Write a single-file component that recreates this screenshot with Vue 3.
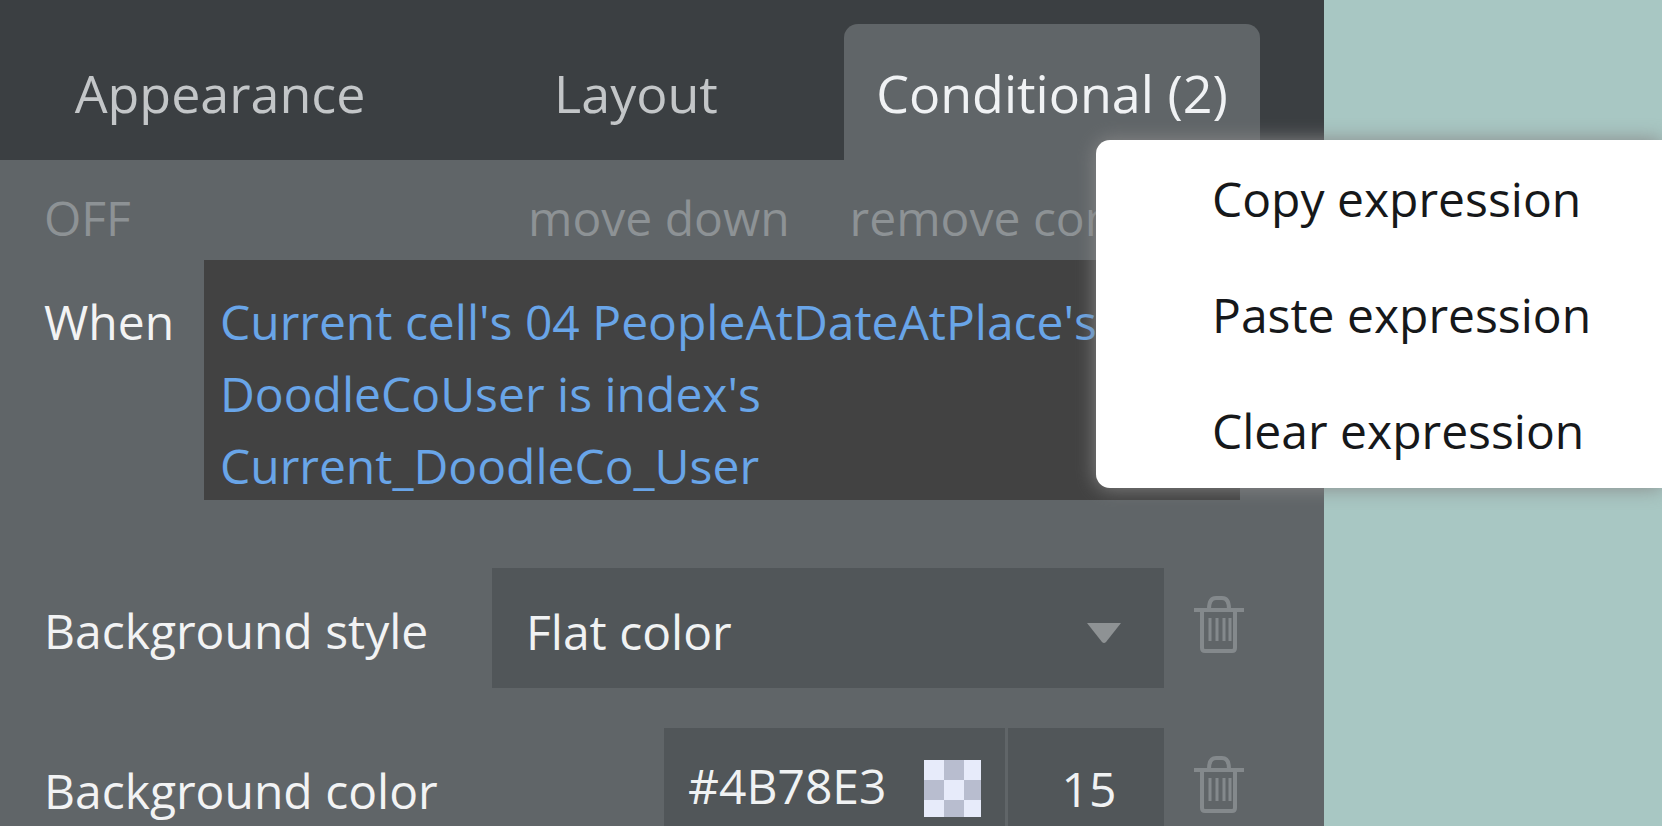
<script setup>
import { ref } from 'vue'

const tabs = ['Appearance', 'Layout', 'Conditional (2)']
const activeTab = ref(2)
const expression = ref(
  "Current cell's 04 PeopleAtDateAtPlace's DoodleCoUser is index's Current_DoodleCo_User"
)
const backgroundStyle = ref('Flat color')
const colorHex = ref('#4B78E3')
const opacity = ref('15')
const menuItems = ['Copy expression', 'Paste expression', 'Clear expression']
</script>

<template>
  <div class="page">
    <section class="panel">
      <nav class="tabs" role="tablist">
        <button
          v-for="(tab, i) in tabs"
          :key="tab"
          type="button"
          role="tab"
          class="tab"
          :class="{ active: activeTab === i }"
          :aria-selected="activeTab === i"
          @click="activeTab = i"
        >{{ tab }}</button>
      </nav>

      <div class="body">
        <div class="actions">
          <button type="button" class="action toggle">OFF</button>
          <button type="button" class="action">move down</button>
          <button type="button" class="action">remove condition</button>
        </div>

        <div class="when">
          <label class="label" for="when">When</label>
          <textarea id="when" v-model="expression" class="expression" rows="3" spellcheck="false"></textarea>
        </div>

        <div class="property">
          <label class="label" for="bg-style">Background style</label>
          <div class="select-wrap">
            <select id="bg-style" v-model="backgroundStyle" class="field select">
              <option>Flat color</option>
            </select>
            <svg class="caret" viewBox="0 0 34 20" aria-hidden="true"><path d="M0 0H34L19 19Q17 21 15 19Z" /></svg>
          </div>
          <button type="button" class="trash" aria-label="Remove background style">
            <svg viewBox="0 0 50 58" aria-hidden="true">
              <path d="M0 15H50M8 16V53Q8 56 11 56H38Q41 56 41 53V16M15 14C15 6 18 3 22 3H28C32 3 35 6 35 14" />
              <path class="ribs" d="M16 23V46M23 23V46M30 23V46M36 23V46" />
            </svg>
          </button>
        </div>

        <div class="property">
          <label class="label" for="bg-color">Background color</label>
          <div class="color-group">
            <div class="color-wrap">
              <input id="bg-color" v-model="colorHex" class="field hex" type="text" />
              <span class="swatch"></span>
            </div>
            <input v-model="opacity" class="field opacity" type="text" aria-label="Opacity" />
          </div>
          <button type="button" class="trash" aria-label="Remove background color">
            <svg viewBox="0 0 50 58" aria-hidden="true">
              <path d="M0 15H50M8 16V53Q8 56 11 56H38Q41 56 41 53V16M15 14C15 6 18 3 22 3H28C32 3 35 6 35 14" />
              <path class="ribs" d="M16 23V46M23 23V46M30 23V46M36 23V46" />
            </svg>
          </button>
        </div>
      </div>
    </section>

    <div class="menu" role="menu">
      <button v-for="item in menuItems" :key="item" type="button" role="menuitem" class="menu-item">{{ item }}</button>
    </div>
  </div>
</template>

<style>
body {
  background: #a8c7c3;
}
</style>

<style scoped>
.page {
  position: relative;
  height: 100vh;
  padding-right: 338px;
  overflow: hidden;
  box-sizing: border-box;
  background: #a8c7c3;
  font-family: "Open Sans", "Noto Sans", sans-serif;
  font-size: 48px;
}

.page * {
  box-sizing: border-box;
}

button,
input,
select,
textarea {
  margin: 0;
  padding: 0;
  border: 0;
  border-radius: 0;
  outline: 0;
  background: none;
  color: inherit;
  font: inherit;
}

.panel {
  min-height: 100%;
  background: #606568;
}

.tabs {
  display: grid;
  grid-template-columns: repeat(3, 1fr);
  height: 160px;
  padding: 24px 64px 0 12px;
  background: #3b3f42;
}

.tab {
  border-radius: 14px 14px 0 0;
  color: #c3c6c8;
  font-size: 52px;
  white-space: nowrap;
}

.tab.active {
  background: #606568;
  color: #f0f2f4;
}

.body {
  padding: 20px 80px 0 44px;
}

.actions {
  display: flex;
  gap: 60px;
  height: 80px;
  line-height: 76px;
}

.action {
  height: 76px;
  color: #8d9295;
  white-space: nowrap;
}

.toggle {
  flex: 0 0 424px;
  text-align: left;
}

.when {
  display: flex;
  align-items: flex-start;
  margin-right: 4px;
  margin-bottom: 68px;
}

.label {
  flex: 1;
  padding-top: 4px;
  color: #f2f3f4;
  white-space: nowrap;
}

.when .label {
  flex: 0 0 160px;
  padding-top: 26px;
  line-height: 72px;
}

.expression {
  flex: 1;
  height: 240px;
  padding: 26px 16px 0;
  overflow: hidden;
  resize: none;
  background: #424242;
  color: #69a5e8;
  line-height: 72px;
}

.property {
  display: flex;
  align-items: center;
  height: 120px;
  margin-bottom: 40px;
}

.field {
  height: 120px;
  background: #515659;
  color: #f0f2f3;
}

.select-wrap {
  position: relative;
  width: 672px;
}

.select {
  width: 100%;
  padding-top: 6px;
  padding-left: 34px;
  appearance: none;
}

.caret {
  position: absolute;
  top: 55px;
  right: 43px;
  width: 34px;
  height: 20px;
  fill: #8e9294;
  pointer-events: none;
}

.color-group {
  display: flex;
  gap: 3px;
  width: 500px;
}

.color-wrap {
  position: relative;
  flex: 1;
}

.hex {
  width: 100%;
  padding-bottom: 6px;
  padding-left: 24px;
}

.swatch {
  position: absolute;
  top: 32px;
  right: 24px;
  width: 57px;
  height: 57px;
  background: repeating-conic-gradient(#b8bdcf 0 25%, #e7ebfa 0 50%) 0 0 / 40px 40px;
}

.opacity {
  width: 156px;
  padding-left: 6px;
  text-align: center;
}

.trash {
  width: 50px;
  height: 58px;
  margin-bottom: 8px;
  margin-left: 30px;
}

.trash svg {
  display: block;
  width: 50px;
  height: 58px;
  fill: none;
  stroke: #84898c;
  stroke-width: 4;
}

.trash .ribs {
  stroke-width: 3;
}

.menu {
  position: absolute;
  top: 140px;
  right: 0;
  width: 566px;
  border-radius: 14px 0 0 14px;
  background: #fff;
  box-shadow: 0 0 20px #888;
}

.menu-item {
  display: block;
  width: 100%;
  height: 116px;
  padding-left: 116px;
  color: #16181a;
  text-align: left;
}
</style>
